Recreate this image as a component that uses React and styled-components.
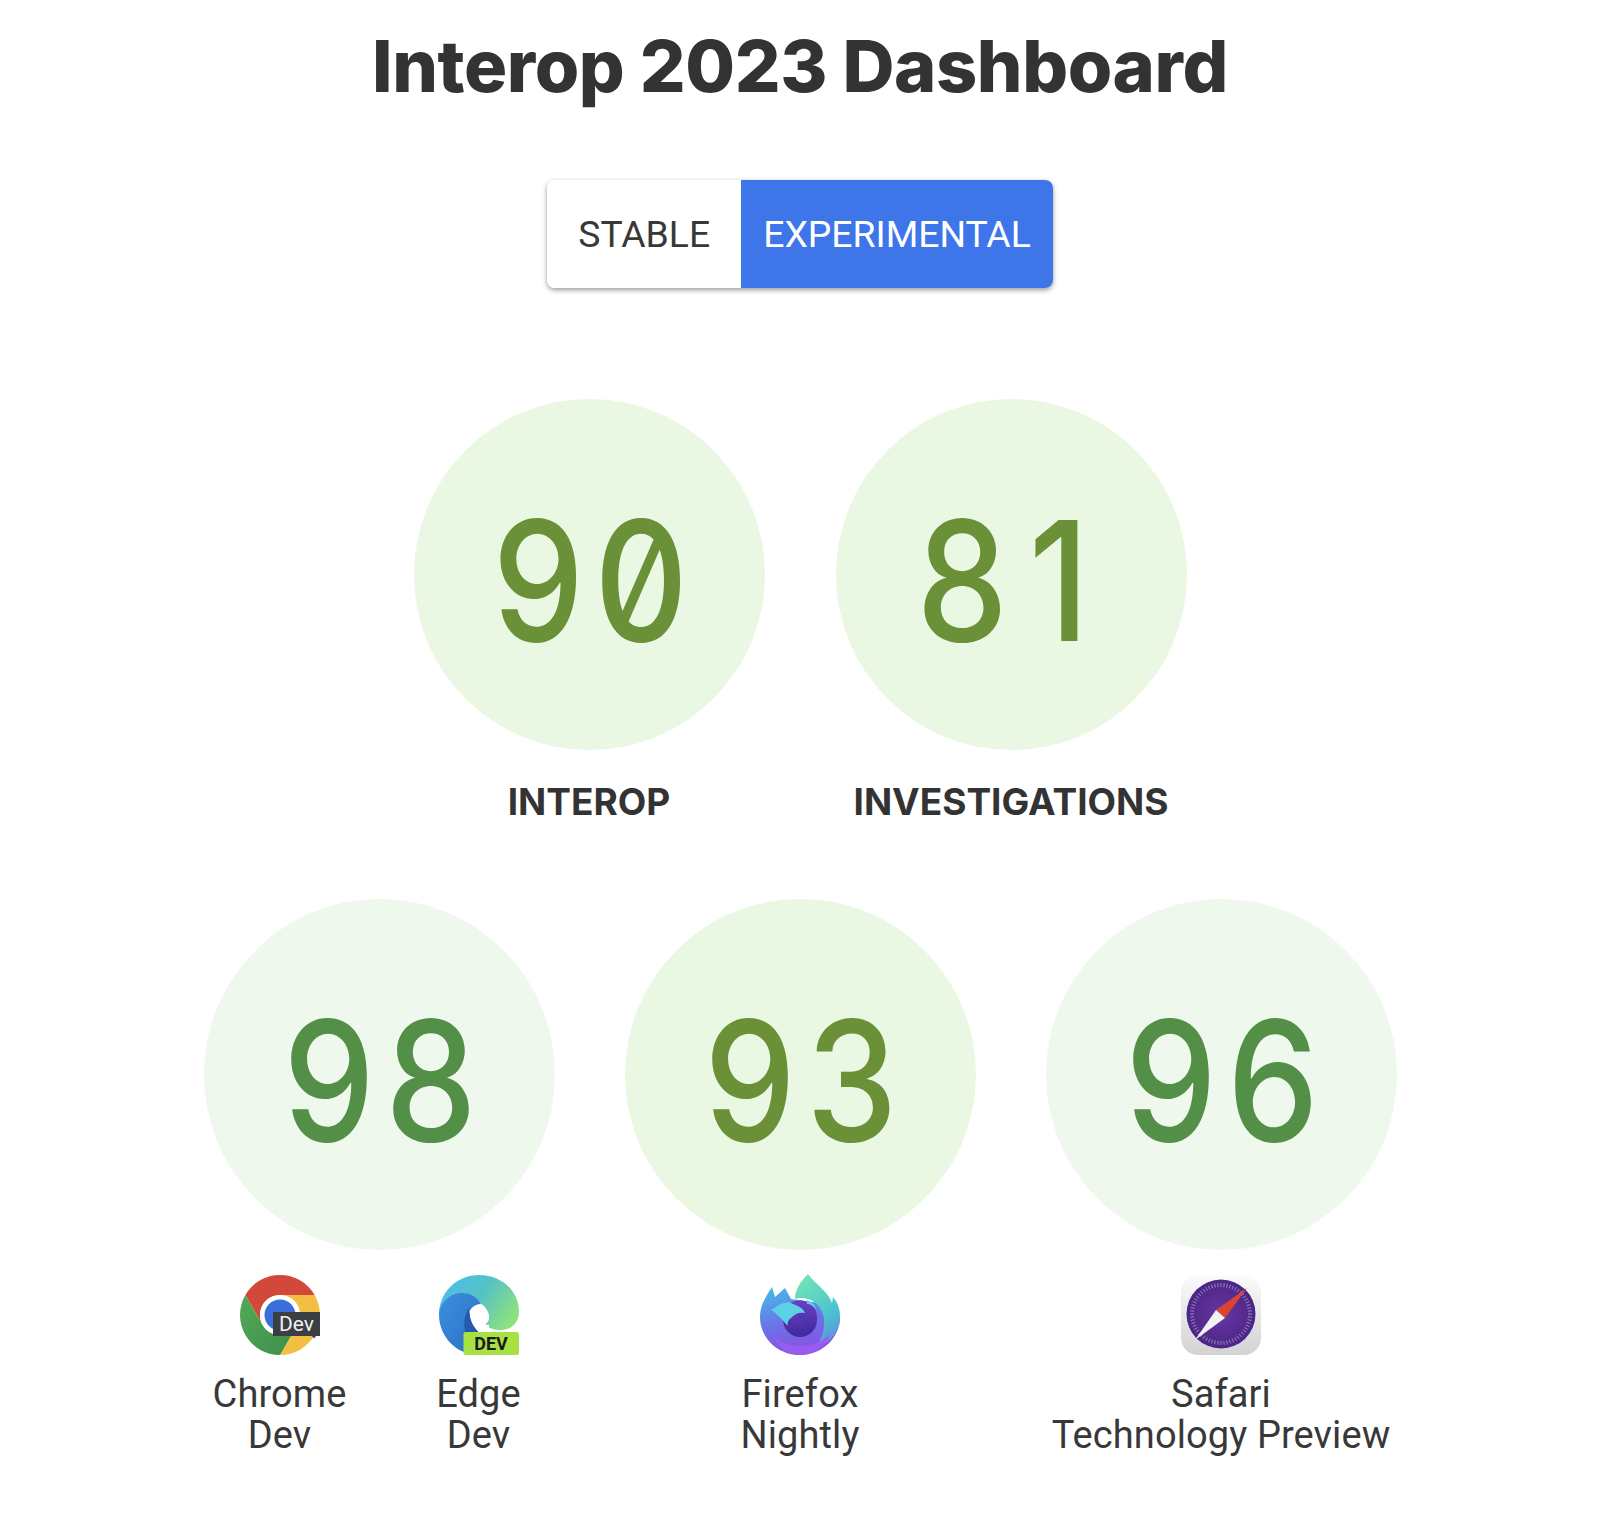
import React from "react";
import styled, { createGlobalStyle } from "styled-components";

const GlobalStyle = createGlobalStyle`
  body {
    margin: 0;
    background: #fff;
    color: #333;
    font-family: Roboto, "Liberation Sans", sans-serif;
  }
`;

export default function App() {
  return (
    <Page>
      <GlobalStyle />
      <Title>Interop 2023 Dashboard</Title>
      <Toggle>
        <ToggleButton>STABLE</ToggleButton>
        <ToggleButton $active>EXPERIMENTAL</ToggleButton>
      </Toggle>
      <SummaryRow>
        <ScoreColumn>
          <ScoreCircle $tone="lime"><Digits>90</Digits></ScoreCircle>
          <ScoreLabel>INTEROP</ScoreLabel>
        </ScoreColumn>
        <ScoreColumn>
          <ScoreCircle $tone="lime"><Digits $hasOne>81</Digits></ScoreCircle>
          <ScoreLabel>INVESTIGATIONS</ScoreLabel>
        </ScoreColumn>
      </SummaryRow>
      <BrowserRow>
        <ScoreColumn>
          <ScoreCircle $tone="green"><Digits>98</Digits></ScoreCircle>
          <Browsers>
            <Browser $narrow>
              <ChromeDevIcon />
              <BrowserName>
                Chrome
                <br />
                Dev
              </BrowserName>
            </Browser>
            <Browser $narrow>
              <EdgeDevIcon />
              <BrowserName>
                Edge
                <br />
                Dev
              </BrowserName>
            </Browser>
          </Browsers>
        </ScoreColumn>
        <ScoreColumn>
          <ScoreCircle $tone="lime"><Digits>93</Digits></ScoreCircle>
          <Browsers>
            <Browser>
              <FirefoxNightlyIcon />
              <BrowserName>
                Firefox
                <br />
                Nightly
              </BrowserName>
            </Browser>
          </Browsers>
        </ScoreColumn>
        <ScoreColumn>
          <ScoreCircle $tone="green"><Digits>96</Digits></ScoreCircle>
          <Browsers>
            <Browser>
              <SafariPreviewIcon />
              <BrowserName>
                Safari
                <br />
                Technology Preview
              </BrowserName>
            </Browser>
          </Browsers>
        </ScoreColumn>
      </BrowserRow>
    </Page>
  );
}

//icons

function ChromeDevIcon() {
  return (
    <Icon viewBox="0 0 80 80">
      <defs>
        <linearGradient id="chromeGreen" x1="0" y1="0" x2="1" y2="1">
          <stop offset="0" stopColor="#54a858" />
          <stop offset="1" stopColor="#3c8f49" />
        </linearGradient>
      </defs>
      <path d="M5.36 20A40 40 0 0 1 74.64 20L40 20A20 20 0 0 0 22.68 50Z" fill="#d2483a" />
      <path d="M74.64 20A40 40 0 0 1 40 80L57.32 50A20 20 0 0 0 40 20Z" fill="#f2bf42" />
      <path d="M40 80A40 40 0 0 1 5.36 20L22.68 50A20 20 0 0 0 57.32 50Z" fill="url(#chromeGreen)" />
      <circle cx="40" cy="40" r="20" fill="#fff" />
      <circle cx="40" cy="40" r="15.5" fill="#3a6fdb" />
      <path d="M33 37H80V61H76L74 63.5L72 61H33Z" fill="#3b3e43" />
      <BadgeText x="56.5" y="56" fontSize="21" fill="#f0f0f0">
        Dev
      </BadgeText>
    </Icon>
  );
}

function EdgeDevIcon() {
  return (
    <Icon viewBox="0 0 80 80">
      <defs>
        <linearGradient id="edgeTop" x1="0" y1="0.2" x2="1" y2="0.65">
          <stop offset="0" stopColor="#4cbcf0" />
          <stop offset="0.5" stopColor="#55c2c4" />
          <stop offset="1" stopColor="#8ee27e" />
        </linearGradient>
        <linearGradient id="edgeBlue" x1="0" y1="0" x2="1" y2="1">
          <stop offset="0" stopColor="#3d8fe0" />
          <stop offset="1" stopColor="#2a6fc4" />
        </linearGradient>
      </defs>
      <path
        d="M0 40C0 17 18 0 40 0C63 0 80 16 80 37C80 48 72 55 62 55C55 55 49 53 46 49C50 47 51 42 49 38C45 30 38 25 28 25C15 25 4 32 0 40Z"
        fill="url(#edgeTop)"
      />
      <path
        d="M0 40C1 27 11 18 23 18C33 18 39 23 42 30C34 30 29 35 29 42C29 50 33 58 40 62L40 80C18 80 0 62 0 40Z"
        fill="url(#edgeBlue)"
      />
      <path d="M30 33C23 42 24 58 32 72L44 62C37 55 31 46 30 33Z" fill="#2559ad" />
      <path
        d="M42 29C35 29 30 34 31 41C32 48 36 54 42 59L50 57L50 50C47 50 46 49 46 49C50 47 51 42 49 37C47 33 45 30 42 29Z"
        fill="#fff"
      />
      <rect x="24.5" y="57" width="55.5" height="23" rx="2.5" fill="#a8e143" />
      <BadgeText x="52" y="75" fontSize="18" fontWeight="700" fill="#1a1a1a">
        DEV
      </BadgeText>
    </Icon>
  );
}

function FirefoxNightlyIcon() {
  return (
    <Icon viewBox="0 0 80 82" $tall>
      <defs>
        <linearGradient id="foxBody" x1="0.2" y1="0" x2="0.5" y2="1">
          <stop offset="0" stopColor="#45b9ea" />
          <stop offset="0.55" stopColor="#6f6fe8" />
          <stop offset="1" stopColor="#8a4fe0" />
        </linearGradient>
        <linearGradient id="foxFlame" x1="0.3" y1="0" x2="0.7" y2="1">
          <stop offset="0" stopColor="#72e4b4" />
          <stop offset="0.6" stopColor="#4cc4d0" />
          <stop offset="1" stopColor="#5c8ce0" />
        </linearGradient>
        <linearGradient id="foxGlobe" x1="0.5" y1="0" x2="0.5" y2="1">
          <stop offset="0" stopColor="#6c3fc8" />
          <stop offset="1" stopColor="#3f2a9c" />
        </linearGradient>
      </defs>
      <path
        d="M40 82C18 82 0 65 0 44C0 34 4 26 12 14L15 24L25 15L31 26L60 30L80 44C80 65 62 82 40 82Z"
        fill="url(#foxBody)"
      />
      <path
        d="M48 1C41 8 35 16 35 26C50 22 62 32 64 46C65 60 60 70 52 76C68 72 80 60 80 44C80 36 78 30 73 24L72 30C68 18 56 12 48 1Z"
        fill="url(#foxFlame)"
      />
      <path d="M12 62C22 76 58 78 70 60C66 76 52 82 40 82C28 82 18 74 12 62Z" fill="#9a5cf0" />
      <circle cx="40" cy="47" r="17" fill="url(#foxGlobe)" />
      <path d="M28 32C36 24 50 26 56 38C58 46 56 56 50 60L36 42Z" fill="url(#foxGlobe)" />
      <path
        d="M11 37L20 31L28 29C36 32 43 34 45 40C40 39 36 40 32 44C28 47 27 50 28 53C22 47 18 41 11 37Z"
        fill="#5cd0e4"
      />
      <path d="M47 27C52 29 55 31 56 36C52 32 50 31 47 31Z" fill="#5cd0e4" />
    </Icon>
  );
}

const compassTicks = Array.from({ length: 60 }, (_, i) => (i * Math.PI) / 30);

function SafariPreviewIcon() {
  return (
    <Icon viewBox="0 0 80 80">
      <defs>
        <linearGradient id="safariTile" x1="0" y1="0" x2="0" y2="1">
          <stop offset="0" stopColor="#fbfbfb" />
          <stop offset="1" stopColor="#d2d2d4" />
        </linearGradient>
        <radialGradient id="safariDial">
          <stop offset="0" stopColor="#6a35a6" />
          <stop offset="1" stopColor="#4a2685" />
        </radialGradient>
      </defs>
      <rect width="80" height="80" rx="17" fill="url(#safariTile)" />
      <circle cx="40" cy="39" r="34.5" fill="url(#safariDial)" />
      {compassTicks.map((a) => (
        <line
          key={a}
          x1={40 + 27 * Math.cos(a)}
          y1={39 + 27 * Math.sin(a)}
          x2={40 + 31 * Math.cos(a)}
          y2={39 + 31 * Math.sin(a)}
          stroke="#a78fc8"
          strokeWidth="0.9"
        />
      ))}
      <path d="M66 13L35 35L44 43Z" fill="#d9452f" />
      <path d="M14 65L35 35L44 43Z" fill="#f2f2f4" />
    </Icon>
  );
}

//style

const Page = styled.main`
  display: flex;
  flex-direction: column;
  align-items: center;
  padding-top: 23px;
`;

const Title = styled.h1`
  margin: 0;
  font-family: Inter, "Liberation Sans", sans-serif;
  font-size: 72px;
  line-height: 85px;
  font-weight: 800;
  letter-spacing: -0.4px;
  color: #333;
`;

const Toggle = styled.div`
  display: flex;
  margin-top: 72px;
  border-radius: 8px;
  overflow: hidden;
  box-shadow: 0 2px 5px rgba(0, 0, 0, 0.4);
`;

const ToggleButton = styled.div`
  display: flex;
  align-items: center;
  justify-content: center;
  box-sizing: border-box;
  min-width: 194px;
  height: 108px;
  padding: 0 22px;
  font-size: 37.3px;
  background: ${(p) => (p.$active ? "#3e75e8" : "#fff")};
  color: ${(p) => (p.$active ? "#fff" : "#383838")};
`;

const SummaryRow = styled.section`
  display: flex;
  gap: 71px;
  margin-top: 111px;
`;

const BrowserRow = styled.section`
  display: grid;
  grid-template-columns: repeat(3, 351px);
  column-gap: 70px;
  margin-top: 75px;
`;

const ScoreColumn = styled.div`
  display: flex;
  flex-direction: column;
  align-items: center;
  width: 351px;
`;

const tones = {
  lime: { bg: "#eaf8e3", fg: "#6a9138" },
  green: { bg: "#eff8ed", fg: "#548f48" },
};

const ScoreCircle = styled.div`
  display: flex;
  align-items: center;
  justify-content: center;
  width: 351px;
  height: 351px;
  border-radius: 50%;
  background: ${(p) => tones[p.$tone].bg};
  color: ${(p) => tones[p.$tone].fg};
`;

const Digits = styled.span`
  display: block;
  padding-top: 12px;
  font-family: Inter, "DejaVu Sans", sans-serif;
  font-variant-numeric: slashed-zero;
  font-size: 167px;
  font-weight: 500;
  line-height: 1;
  letter-spacing: ${(p) => (p.$hasOne ? "24px" : "12px")};
  margin-right: ${(p) => (p.$hasOne ? "-4px" : "-12px")};
  transform: scaleX(0.87);
`;

const ScoreLabel = styled.div`
  margin-top: 30px;
  font-family: Inter, "Liberation Sans", sans-serif;
  font-size: 37px;
  line-height: 44px;
  font-weight: 700;
  color: #333;
`;

const Browsers = styled.div`
  display: flex;
  justify-content: center;
  gap: 69px;
  margin-top: 25px;
`;

const Browser = styled.div`
  display: flex;
  flex-direction: column;
  align-items: center;
  flex: none;
  width: ${(p) => (p.$narrow ? "130px" : "auto")};
`;

const Icon = styled.svg`
  display: block;
  width: 80px;
  height: ${(p) => (p.$tall ? "82px" : "80px")};
  margin-top: ${(p) => (p.$tall ? "-2px" : "0")};
`;

const BadgeText = styled.text`
  font-family: Roboto, "Liberation Sans", sans-serif;
  text-anchor: middle;
`;

const BrowserName = styled.div`
  margin-top: 19px;
  font-size: 38px;
  line-height: 41px;
  letter-spacing: 0.1px;
  text-align: center;
  white-space: nowrap;
  color: #383838;
`;
